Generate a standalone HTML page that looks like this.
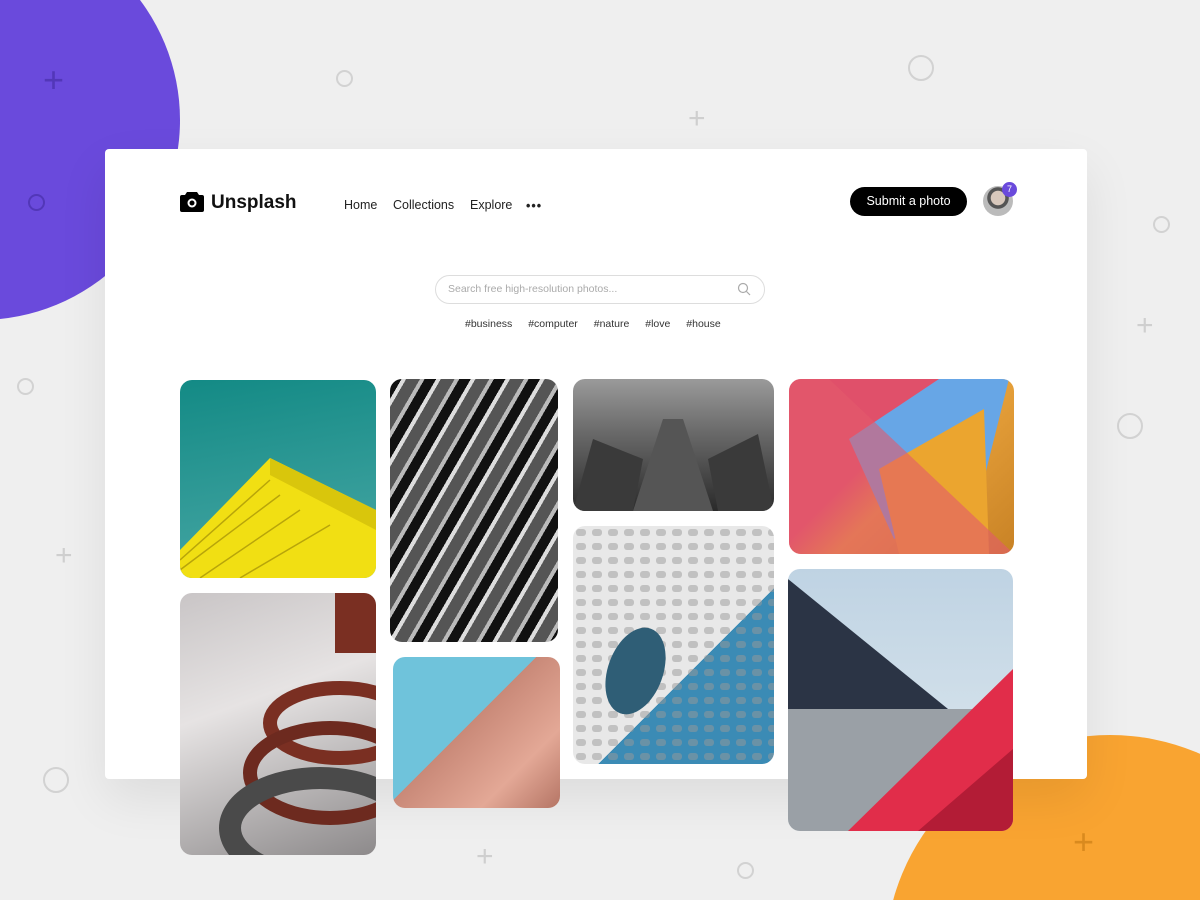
<!DOCTYPE html><html><head><style>
*{margin:0;padding:0;box-sizing:border-box}
html{width:1200px;height:900px;overflow:hidden}
body{width:1200px;height:900px;background:#efefef;position:relative;overflow:hidden;font-family:"Liberation Sans",sans-serif}
.a{position:absolute}
.ring{position:absolute;border:2.5px solid #d2d2d2;border-radius:50%}
.plus{position:absolute;color:#cfcfcf;font-size:30px;line-height:1;font-weight:300}
.card{left:105px;top:149px;width:982px;height:630px;background:#fff;border-radius:4px;box-shadow:0 20px 50px rgba(0,0,0,.08)}
.ph{position:absolute;border-radius:12px;overflow:hidden}
.nav{font-size:12.5px;color:#222;top:198px}
</style></head><body>
<div class="a" style="left:-220px;top:-80px;width:400px;height:400px;border-radius:50%;background:#6a4adc"></div>
<div class="a" style="left:885px;top:735px;width:450px;height:450px;border-radius:50%;background:#f9a431"></div>
<div class="ring" style="left:336px;top:70px;width:17px;height:17px"></div>
<div class="ring" style="left:908px;top:55px;width:26px;height:26px"></div>
<div class="ring" style="left:1153px;top:216px;width:17px;height:17px"></div>
<div class="ring" style="left:1117px;top:413px;width:26px;height:26px"></div>
<div class="ring" style="left:17px;top:378px;width:17px;height:17px"></div>
<div class="ring" style="left:43px;top:767px;width:26px;height:26px"></div>
<div class="ring" style="left:737px;top:862px;width:17px;height:17px"></div>
<div class="ring" style="left:28px;top:194px;width:17px;height:17px;border-color:#5237b8"></div>
<div class="plus" style="left:688px;top:104px">+</div>
<div class="plus" style="left:1136px;top:311px">+</div>
<div class="plus" style="left:55px;top:541px">+</div>
<div class="plus" style="left:476px;top:842px">+</div>
<div class="plus" style="left:1073px;top:824px;color:#d98a1e;font-size:36px">+</div>
<div class="plus" style="left:43px;top:62px;color:#5237b8;font-size:36px">+</div>
<div class="a card"></div>
<svg class="a" style="left:180px;top:192px" width="24" height="20" viewBox="0 0 24 20"><path d="M7 0h10l2 3h3a2 2 0 0 1 2 2v13a2 2 0 0 1-2 2H2a2 2 0 0 1-2-2V5a2 2 0 0 1 2-2h3z" fill="#000"/><circle cx="12" cy="11" r="4.5" fill="#fff"/><circle cx="12" cy="11" r="2.5" fill="#000"/></svg>
<div class="a" style="left:211px;top:192px;font-size:19px;font-weight:bold;color:#111">Unsplash</div>
<div class="a nav" style="left:344px">Home</div>
<div class="a nav" style="left:393px">Collections</div>
<div class="a nav" style="left:470px">Explore</div>
<div class="a nav" style="left:526px;top:199px;font-weight:bold;letter-spacing:1px">•••</div>
<div class="a" style="left:850px;top:187px;width:117px;height:29px;border-radius:15px;background:#000;color:#fff;font-size:12.5px;text-align:center;line-height:29px">Submit a photo</div>
<div class="a" style="left:983px;top:186px;width:30px;height:30px;border-radius:50%;background:radial-gradient(circle at 50% 40%,#d8c8bc 0 30%,#555 32% 45%,#bbb 47%)"></div>
<div class="a" style="left:1002px;top:182px;width:15px;height:15px;border-radius:50%;background:#6a4adc;color:#fff;font-size:9px;text-align:center;line-height:15px">7</div>
<div class="a" style="left:435px;top:275px;width:330px;height:29px;border:1.5px solid #ddd;border-radius:15px;font-size:10.5px;color:#aaa;padding-left:12px;line-height:26px">Search free high-resolution photos...</div>
<svg class="a" style="left:737px;top:282px" width="14" height="14"><circle cx="6" cy="6" r="4.5" stroke="#aaa" fill="none" stroke-width="1.2"/><path d="M9.5 9.5l3.5 3.5" stroke="#aaa" stroke-width="1.2"/></svg>
<div class="a" style="left:465px;top:318px;font-size:10.5px;color:#333;word-spacing:13px;white-space:nowrap">#business #computer #nature #love #house</div>

<div class="ph" style="left:180px;top:380px;width:196px;height:198px;background:linear-gradient(170deg,#138a85,#4aa8a6)"><svg width="196" height="198"><path d="M0 170L90 78L196 130V198H0Z" fill="#f1df13"/><path d="M90 78L196 130V150L90 95Z" fill="#d9c60c"/><path d="M0 180L90 100M0 190L100 115M20 198L120 130M60 198L150 145" stroke="#b8a50a" stroke-width="1.5"/></svg></div>
<div class="ph" style="left:180px;top:593px;width:196px;height:262px;background:linear-gradient(160deg,#c9c5c6,#e6e3e3 40%,#8d8a8b)"><svg width="196" height="262"><ellipse cx="160" cy="130" rx="70" ry="35" fill="none" stroke="#7a2f22" stroke-width="14"/><ellipse cx="150" cy="180" rx="80" ry="45" fill="none" stroke="#6d2a1f" stroke-width="14"/><ellipse cx="140" cy="235" rx="90" ry="50" fill="none" stroke="#4a4a4a" stroke-width="22"/><rect x="155" y="0" width="41" height="60" fill="#7a2f22"/></svg></div>
<div class="ph" style="left:390px;top:379px;width:168px;height:263px;background:repeating-linear-gradient(120deg,#111 0 10px,#ddd 10px 14px,#555 14px 26px,#bbb 26px 30px)"></div>
<div class="ph" style="left:393px;top:657px;width:167px;height:151px;background:linear-gradient(135deg,#6fc3db 0 45%,#c98978 45%,#e3a896 75%,#b57565)"></div>
<div class="ph" style="left:573px;top:379px;width:201px;height:132px;background:linear-gradient(180deg,#9a9a9a,#6a6a6a 40%,#2a2a2a)"><svg width="201" height="132"><path d="M60 132L90 40L110 40L140 132Z" fill="#555"/><path d="M0 132L20 60L70 80L60 132Z" fill="#3a3a3a"/><path d="M201 132L185 55L135 80L145 132Z" fill="#3a3a3a"/></svg></div>
<div class="ph" style="left:573px;top:526px;width:201px;height:238px;background:linear-gradient(135deg,#e8e8e8 0 60%,#3b8bb5 60%)"><svg width="201" height="238" style="opacity:.5"><pattern id="q" width="16" height="14" patternUnits="userSpaceOnUse"><rect x="3" y="3" width="10" height="7" rx="3" fill="#999"/></pattern><rect width="201" height="238" fill="url(#q)"/></svg><div class="a" style="left:35px;top:100px;width:55px;height:90px;border-radius:50%;background:#2f5e76;transform:rotate(20deg)"></div></div>
<div class="ph" style="left:789px;top:379px;width:225px;height:175px;background:linear-gradient(135deg,#e0506a 0 40%,#e6a03a 55%,#c88225)"><svg width="225" height="175"><path d="M60 60L150 0L220 0L195 100L105 160Z" fill="#67a6e6"/><path d="M90 90L195 30L200 175L110 175Z" fill="#eba52f"/><path d="M0 0L40 0L225 175L0 175Z" fill="#e25a6d" opacity=".6"/></svg></div>
<div class="ph" style="left:788px;top:569px;width:225px;height:262px;background:linear-gradient(180deg,#bfd3e3,#dfe9ef)"><svg width="225" height="262"><path d="M0 10L160 140L0 140Z" fill="#2b3445"/><path d="M0 140L225 140L225 262L0 262Z" fill="#9aa0a6"/><path d="M60 262L225 100L225 262Z" fill="#e12d4a"/><path d="M130 262L225 180L225 262Z" fill="#b31c36"/></svg></div>
</body></html>
